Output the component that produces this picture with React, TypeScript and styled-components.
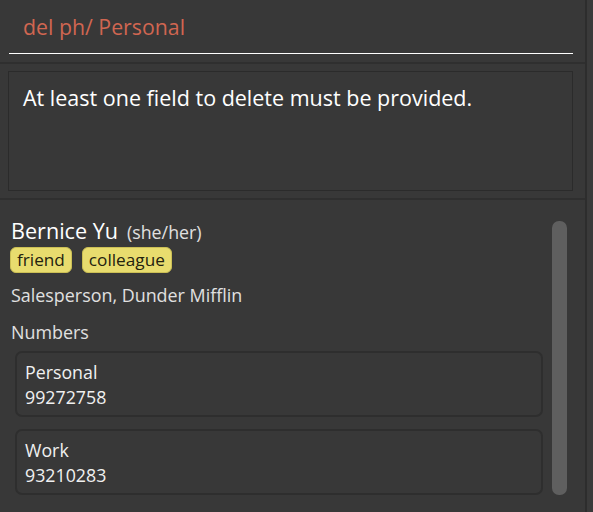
import React from "react";
import styled, { createGlobalStyle } from "styled-components";

const Global = createGlobalStyle`
  html, body { margin: 0; padding: 0; background: #383838; }
  body { font-family: "Open Sans", "Noto Sans", sans-serif; }
`;

const Window = styled.div`
  width: 593px;
  height: 512px;
  display: flex;
  background: #383838;
  overflow: hidden;
`;

const Main = styled.div`
  width: 585px;
  display: flex;
  flex-direction: column;
`;

const Edge = styled.div`
  width: 6px;
  border-left: 2px solid #2d2d2d;
  background: #3a3a3a;
`;

const CommandSection = styled.div`
  height: 64px;
  box-sizing: border-box;
  padding: 0 12px 0 9px;
  border-bottom: 2px solid #2f2f2f;
`;

const CommandInput = styled.div`
  height: 54px;
  box-sizing: border-box;
  border-bottom: 1.5px solid #ffffff;
  padding: 12px 0 0 14px;
  font-size: 21.3px;
  line-height: 30px;
  color: #d06651;
`;

const ResultSection = styled.div`
  height: 136px;
  box-sizing: border-box;
  padding: 7px 12px 7px 8px;
  border-bottom: 2px solid #2f2f2f;
`;

const ResultBox = styled.div`
  height: 100%;
  box-sizing: border-box;
  border: 1px solid #2b2b2b;
  padding: 11px 14px;
  font-size: 21.5px;
  line-height: 30px;
  color: #ffffff;
`;

const ListSection = styled.div`
  flex: 1;
  display: flex;
  padding: 20px 18px 17px 10px;
  gap: 9px;
`;

const Person = styled.div`
  flex: 1;
  display: flex;
  flex-direction: column;
`;

const NameRow = styled.div`
  display: flex;
  align-items: baseline;
  gap: 9px;
  color: #ffffff;
  margin-left: 1px;
  line-height: 22px;
`;

const Name = styled.span`
  font-size: 21.6px;
`;

const Pronouns = styled.span`
  font-size: 17.8px;
  color: #e0e0e0;
`;

const Tags = styled.div`
  display: flex;
  gap: 10px;
  margin-top: 4px;
`;

const Tag = styled.span`
  background: #e8dc6e;
  color: #23220f;
  font-size: 17.2px;
  line-height: 24px;
  padding: 0 6px;
  border-radius: 6px;
  border: 1px solid #cbbf55;
`;

const Line = styled.div<{ $top: number }>`
  margin-top: ${(p) => p.$top}px;
  margin-left: 1px;
  font-size: 17.9px;
  line-height: 22px;
  color: #e0e0e0;
`;

const Cards = styled.div`
  display: flex;
  flex-direction: column;
  gap: 12px;
  margin: 8px 0 0 5px;
`;

const Card = styled.div`
  border: 2px solid #2e2e2e;
  border-radius: 7px;
  padding: 7px 8px 5px;
  color: #f0f0f0;
  font-size: 17.8px;
  line-height: 25px;
`;

const ScrollTrack = styled.div`
  width: 15px;
  display: flex;
  flex-direction: column;
`;

const Thumb = styled.div`
  height: 274px;
  margin-top: 1px;
  background: #5f5f5f;
  border-radius: 7px;
`;

const numbers = [
  { label: "Personal", value: "99272758" },
  { label: "Work", value: "93210283" },
];

export default function App() {
  return (
    <>
      <Global />
      <Window>
        <Main>
          <CommandSection>
            <CommandInput>del ph/ Personal</CommandInput>
          </CommandSection>
          <ResultSection>
            <ResultBox>At least one field to delete must be provided.</ResultBox>
          </ResultSection>
          <ListSection>
            <Person>
              <NameRow>
                <Name>Bernice Yu</Name>
                <Pronouns>(she/her)</Pronouns>
              </NameRow>
              <Tags>
                <Tag>friend</Tag>
                <Tag>colleague</Tag>
              </Tags>
              <Line $top={11}>Salesperson, Dunder Mifflin</Line>
              <Line $top={15}>Numbers</Line>
              <Cards>
                {numbers.map((n) => (
                  <Card key={n.label}>
                    <div>{n.label}</div>
                    <div>{n.value}</div>
                  </Card>
                ))}
              </Cards>
            </Person>
            <ScrollTrack>
              <Thumb />
            </ScrollTrack>
          </ListSection>
        </Main>
        <Edge />
      </Window>
    </>
  );
}
